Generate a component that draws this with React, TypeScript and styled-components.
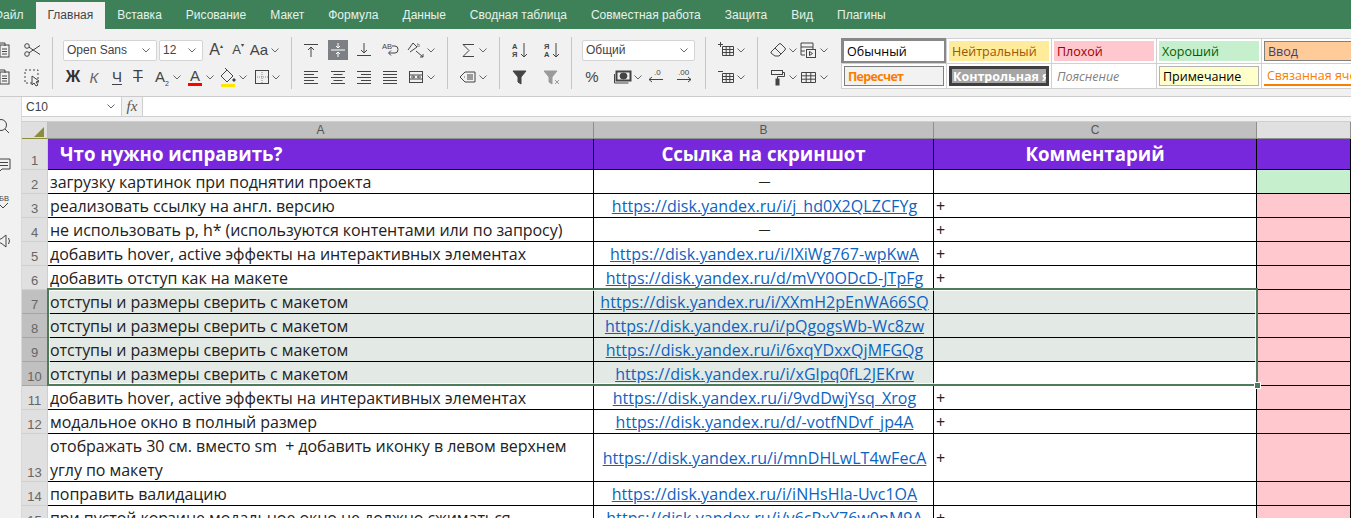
import React from 'react';
import styled, { createGlobalStyle } from 'styled-components';

const GlobalStyle = createGlobalStyle`
  html, body {
    margin: 0;
    height: 518px;
    overflow: hidden;
    background: #f1f1f1;
    font-family: "Liberation Sans", Arial, sans-serif;
  }
`;

const Tabs = styled.div`
  height: 29px;
  background: #3e8159;
  display: flex;
  align-items: flex-end;
  margin-left: -18px;
`;

const Tab = styled.div<{ $active?: boolean }>`
  height: 27px;
  line-height: 26px;
  padding: 0 12px;
  font-size: 12px;
  white-space: nowrap;
  color: ${(p) => (p.$active ? '#444' : '#e6f2ea')};
  background: ${(p) => (p.$active ? '#f1f1f1' : 'transparent')};
`;

const Toolbar = styled.div`
  height: 68px;
  box-sizing: border-box;
  display: flex;
  padding-top: 8px;
  background: #f1f1f1;
  border-bottom: 1px solid #cbcbcb;
  overflow: hidden;
`;

const Group = styled.div<{ $w: number; $pad?: number; $sep?: boolean }>`
  flex: none;
  width: ${(p) => p.$w}px;
  height: 52px;
  box-sizing: border-box;
  padding-left: ${(p) => p.$pad ?? 10}px;
  border-right: ${(p) => (p.$sep === false ? 'none' : '1px solid #c6c6c6')};
`;

const ToolRow = styled.div<{ $second?: boolean }>`
  display: flex;
  align-items: center;
  height: ${(p) => (p.$second ? 28 : 26)}px;
`;

const Tool = styled.div<{ $w?: number; $l?: number; $on?: boolean }>`
  flex: none;
  width: ${(p) => p.$w ?? 20}px;
  height: 20px;
  margin-left: ${(p) => p.$l ?? 0}px;
  display: flex;
  align-items: center;
  justify-content: center;
  color: ${(p) => (p.$on ? '#fff' : '#444')};
  background: ${(p) => (p.$on ? '#7c8085' : 'transparent')};
  font-size: 14px;
  line-height: 20px;
`;

const Select = styled.div<{ $w: number; $l?: number }>`
  flex: none;
  width: ${(p) => p.$w}px;
  height: 21px;
  margin-left: ${(p) => p.$l ?? 0}px;
  box-sizing: border-box;
  padding: 0 6px 0 3px;
  display: flex;
  align-items: center;
  justify-content: space-between;
  background: #fff;
  border: 1px solid #d4d4d4;
  border-radius: 2px;
  font-size: 12px;
  color: #444;
`;

const BoldLetter = styled.span`
  font: bold 16px "Liberation Sans", sans-serif;
  color: #333;
`;
const ItalicLetter = styled.span`
  font: italic 15px "Liberation Sans", sans-serif;
  color: #666;
`;
const UnderLetter = styled.span`
  font-size: 15px;
  border-bottom: 1px solid #444;
  line-height: 14px;
`;
const StrikeLetter = styled.span`
  font-size: 16px;
  text-decoration: line-through;
  text-decoration-thickness: 1px;
`;
const SizeLetter = styled.span<{ $size: number }>`
  font-size: ${(p) => p.$size}px;
`;
const Sup = styled.sup`
  font-size: 6px;
  line-height: 0;
  vertical-align: 7px;
`;
const Sub = styled.sub`
  font-size: 7px;
  line-height: 0;
`;
const ColorLetter = styled.span<{ $bar: string }>`
  font-size: 15px;
  line-height: 15px;
  width: 14px;
  text-align: center;
  border-bottom: 3px solid ${(p) => p.$bar};
`;

const Styles = styled.div`
  flex: none;
  margin-top: 1px;
  display: grid;
  grid-template-columns: repeat(5, 105px);
  grid-template-rows: 25px 25px;
  height: 50px;
`;

const StyleCell = styled.div<{ $flush?: boolean }>`
  box-sizing: border-box;
  border: ${(p) => (p.$flush ? 'none' : '1px solid #d0d0d0')};
  margin: 0 -1px -1px 0;
  padding: ${(p) => (p.$flush ? 0 : 2)}px;
  overflow: hidden;
  background: #fff;
  display: flex;
`;

const Chip = styled.div<{
  $bg?: string;
  $fg?: string;
  $bd?: string;
  $pad?: number;
  $bold?: boolean;
  $italic?: boolean;
  $tight?: boolean;
  $under?: string;
}>`
  flex: 1;
  min-width: 0;
  box-sizing: border-box;
  overflow: hidden;
  white-space: nowrap;
  display: flex;
  align-items: center;
  padding-left: ${(p) => p.$pad ?? 3}px;
  font-family: "Open Sans", sans-serif;
  font-size: 12.5px;
  font-weight: ${(p) => (p.$bold ? 700 : 400)};
  font-style: ${(p) => (p.$italic ? 'italic' : 'normal')};
  letter-spacing: ${(p) => (p.$tight ? '-0.7px' : 'normal')};
  color: ${(p) => p.$fg ?? '#000'};
  background: ${(p) => p.$bg ?? '#fff'};
  border: ${(p) => p.$bd ?? 'none'};
  border-bottom: ${(p) => (p.$under ? `2px solid ${p.$under}` : undefined)};
`;

const Main = styled.div`
  display: flex;
  height: 421px;
`;

const Sidebar = styled.div`
  flex: none;
  width: 22px;
  box-sizing: border-box;
  border-right: 1px solid #d8d8d8;
  overflow: hidden;
  display: flex;
  flex-direction: column;
  gap: 18px;
  padding-top: 20px;
  background: #f1f1f1;
`;

const SideIcon = styled.div`
  height: 20px;
  margin-left: -5px;
  color: #444;
`;

const Content = styled.div`
  flex: 1;
  min-width: 0;
  display: flex;
  flex-direction: column;
`;

const FormulaBar = styled.div`
  height: 20px;
  flex: none;
  box-sizing: border-box;
  display: flex;
  background: #fff;
  border-bottom: 1px solid #cfcfcf;
`;

const NameBox = styled.div`
  width: 100px;
  box-sizing: border-box;
  display: flex;
  align-items: center;
  justify-content: space-between;
  padding: 0 6px 0 4px;
  font-size: 12px;
  color: #444;
  border-right: 1px solid #cfcfcf;
`;

const FxBox = styled.div`
  width: 21px;
  box-sizing: border-box;
  text-align: center;
  font: italic 15px/18px "Liberation Serif", serif;
  color: #555;
  background: #f1f1f1;
  border-right: 1px solid #cfcfcf;
`;

const Spacer = styled.div`
  height: 5px;
  flex: none;
  background: #f1f1f1;
  border-bottom: 1px solid #cfcfcf;
  box-sizing: border-box;
`;

const Sheet = styled.div`
  position: relative;
  flex: 1;
  overflow: hidden;
  background: #fff;
`;

const columns = '26px 546px 340px 323px 1fr';

const HeaderRow = styled.div`
  display: grid;
  grid-template-columns: ${columns};
  height: 17px;
`;

const Corner = styled.div`
  background: #dfdfdf;
  box-sizing: border-box;
  border-bottom: 1px solid #8c8c3e;
  border-right: 1px solid #bdbdbd;
  position: relative;
  &::after {
    content: '';
    position: absolute;
    right: 3px;
    bottom: 1px;
    border-style: solid;
    border-width: 0 0 10px 10px;
    border-color: transparent transparent #8c8c3e transparent;
  }
`;

const ColHead = styled.div<{ $plain?: boolean }>`
  background: ${(p) => (p.$plain ? '#e0e0e0' : '#c0c0c0')};
  box-sizing: border-box;
  border-right: 1px solid #8e8e8e;
  border-bottom: 1px solid #8e8e8e;
  text-align: center;
  font-size: 12px;
  line-height: 16px;
  color: #555;
`;

const Row = styled.div<{ $h: number }>`
  display: grid;
  grid-template-columns: ${columns};
  height: ${(p) => p.$h}px;
`;

const RowHead = styled.div<{ $sel?: boolean }>`
  box-sizing: border-box;
  background: ${(p) => (p.$sel ? '#c0c0c0' : '#e0e0e0')};
  border-right: 1px solid #cfcfcf;
  border-bottom: 1px solid ${(p) => (p.$sel ? '#a6a6a6' : '#cfcfcf')};
  display: flex;
  align-items: flex-end;
  justify-content: center;
  font-size: 13px;
  line-height: 15px;
  padding-bottom: 1px;
  color: #666;
`;

const Cell = styled.div<{ $bg?: string; $center?: boolean; $middle?: boolean }>`
  box-sizing: border-box;
  min-width: 0;
  display: flex;
  align-items: ${(p) => (p.$middle ? 'center' : 'flex-start')};
  justify-content: ${(p) => (p.$center ? 'center' : 'flex-start')};
  padding-left: 2px;
  background: ${(p) => p.$bg ?? '#fff'};
  border-right: 1px solid #000;
  border-bottom: 1px solid #000;
  font-family: "Open Sans", sans-serif;
  font-size: 16px;
  line-height: 24px;
  color: #222;
  white-space: pre-wrap;
  overflow: hidden;
`;

const TaskCell = styled(Cell)`
  letter-spacing: -0.05px;
`;

const TitleCell = styled(Cell)<{ $indent?: number }>`
  align-items: flex-end;
  background: #7828dc;
  color: #fff;
  font-weight: 700;
  font-size: 18.67px;
  line-height: 26px;
  padding-bottom: 2px;
  padding-left: ${(p) => p.$indent ?? 0}px;
  white-space: nowrap;
`;

const Link = styled.a`
  color: #0b63c1;
  text-decoration: underline;
  white-space: nowrap;
  letter-spacing: 0.06px;
`;

const Dash = styled.span`
  font-size: 12px;
`;

const Selection = styled.div`
  position: absolute;
  left: 25px;
  top: 166px;
  width: 1211px;
  height: 98px;
  box-sizing: border-box;
  border: 2px solid #4f7a5c;
  box-shadow: inset 0 0 0 1px rgba(255, 255, 255, 0.8);
  pointer-events: none;
`;

const Handle = styled.div`
  position: absolute;
  right: -5px;
  bottom: -5px;
  width: 5px;
  height: 5px;
  background: #4f7a5c;
  border: 1px solid #fff;
`;

const Chevron = () => (
  <svg width="8" height="5" viewBox="0 0 8 5" fill="none" stroke="#666" strokeWidth="1">
    <path d="M.5 .5L4 4L7.5 .5" />
  </svg>
);

const Chev = ({ l }: { l?: number }) => (
  <Tool $w={10} $l={l}>
    <Chevron />
  </Tool>
);

const gridLines = 'M6.5 6.5h11v9h-11zM6.5 9.5h11M6.5 12.5h11M10.2 6.5v9M13.8 6.5v9';

const icons: Record<string, React.ReactNode> = {
  clipboard: (
    <>
      <rect x="8" y="5" width="9" height="12" />
      <path d="M7 3h6v3M10 9h5M10 11.5h5M10 14h5" />
    </>
  ),
  scissors: (
    <>
      <circle cx="5" cy="6" r="2.3" />
      <circle cx="5" cy="14" r="2.3" />
      <path d="M7 7.2L18 14.5M7 12.8L18 5.5" />
    </>
  ),
  select: (
    <>
      <rect x="3" y="3" width="13" height="13" strokeDasharray="2 2" />
      <path d="M10 9l7 5-3 1 2 3-2 1-2-3-2 2z" fill="#f1f1f1" />
    </>
  ),
  alignTop: <path d="M3 4.5h14M10 17V7M7 10l3-3 3 3" />,
  alignMid: <path d="M3 10h14M10 3v5M8 6l2 2 2-2M10 17v-5M8 14l2-2 2 2" />,
  alignBot: <path d="M3 15.5h14M10 3v10M7 10l3 3 3-3" />,
  wrap: (
    <>
      <text x="2" y="9" fontSize="7.5" fill="currentColor" stroke="none" fontFamily="Liberation Sans">AB</text>
      <path d="M12 6h3q3 0 3 3.5t-3 3.5H9M11 10.5L8.5 13l2.5 2.5" />
    </>
  ),
  orient: (
    <>
      <path d="M2 10l5-7 4 4-7 5M10 11l7 6M14 17h3v-3" />
      <text x="11" y="7" fontSize="5" fill="currentColor" stroke="none" fontFamily="Liberation Sans">b</text>
    </>
  ),
  left: <path d="M3 4.5h14M3 7.5h10M3 10.5h14M3 13.5h10M3 16.5h14" />,
  center: <path d="M3 4.5h14M5.5 7.5h9M3 10.5h14M5.5 13.5h9M3 16.5h14" />,
  right: <path d="M3 4.5h14M7 7.5h10M3 10.5h14M7 13.5h10M3 16.5h14" />,
  justify: <path d="M3 4.5h14M3 7.5h14M3 10.5h14M3 13.5h14M3 16.5h14" />,
  merge: (
    <>
      <rect x="3.5" y="4.5" width="13" height="11" />
      <path d="M3.5 8h13M3.5 12h13M5 10h3.5M7 8.5L8.5 10 7 11.5M15 10h-3.5M13 8.5L11.5 10 13 11.5" />
    </>
  ),
  fill: (
    <>
      <path d="M3 9l6-6 6 6-6 6z" />
      <path d="M9 3L7 1" />
      <circle cx="16" cy="13" r="1.2" fill="currentColor" />
      <path d="M3 18.5h14" stroke="#ffe600" strokeWidth="3" />
    </>
  ),
  border: (
    <>
      <rect x="3.5" y="3.5" width="13" height="13" />
      <path d="M10 5v11M5 10h11" strokeDasharray="1 1" stroke="#888" />
    </>
  ),
  sigma: <path d="M16 4.5H5l6 6-6 6h11" />,
  tag: (
    <>
      <path d="M7 5h10v10H7l-5-5z" />
      <path d="M9 8h6M9 10h6M9 12h6M6 10h.8" />
    </>
  ),
  sortAZ: (
    <>
      <text x="2" y="9" fontSize="7.5" fontWeight="700" fill="currentColor" stroke="none" fontFamily="Liberation Sans">А</text>
      <text x="2" y="17" fontSize="7.5" fontWeight="700" fill="currentColor" stroke="none" fontFamily="Liberation Sans">Я</text>
      <path d="M14 3v14M11 14l3 3 3-3" />
    </>
  ),
  sortZA: (
    <>
      <text x="2" y="9" fontSize="7.5" fontWeight="700" fill="currentColor" stroke="none" fontFamily="Liberation Sans">Я</text>
      <text x="2" y="17" fontSize="7.5" fontWeight="700" fill="currentColor" stroke="none" fontFamily="Liberation Sans">А</text>
      <path d="M14 3v14M11 14l3 3 3-3" />
    </>
  ),
  filter: <path d="M3 4h13l-5 6v7l-3-2v-5z" fill="currentColor" />,
  filterOff: (
    <>
      <path d="M2 4h13l-5 6v7l-3-2v-5z" fill="#9a9a9a" stroke="#9a9a9a" />
      <path d="M13 13l4 4M17 13l-4 4" stroke="#9a9a9a" />
    </>
  ),
  money: (
    <>
      <rect x="3.5" y="4.5" width="14" height="9" fill="none" strokeWidth="2" />
      <ellipse cx="10.5" cy="9" rx="3.5" ry="3" fill="currentColor" />
      <path d="M1.5 7v9h14" />
    </>
  ),
  dec: (
    <>
      <text x="9" y="8" fontSize="8" fill="currentColor" stroke="none" fontFamily="Liberation Sans">.0</text>
      <path d="M18 12.5H4M7 10l-3 2.5L7 15" />
    </>
  ),
  inc: (
    <>
      <text x="3" y="8" fontSize="8" fill="currentColor" stroke="none" fontFamily="Liberation Sans">.00</text>
      <path d="M2 12.5h14M13 10l3 2.5-3 2.5" />
    </>
  ),
  insert: <path d={`${gridLines}M4.5 2v5M2 4.5h5`} />,
  remove: <path d={`${gridLines}M2 4.5h5`} />,
  eraser: <path d="M3 12l8-8q1-1 2 0l4 4q1 1 0 2l-6 6H7l-4-3zM7 8l6 6" />,
  cond: (
    <>
      <path d="M7 15H3V3h12v6M3 7h12M3 11h4" />
      <rect x="8.5" y="9.5" width="9" height="8" fill="#f1f1f1" />
      <path d="M11.5 11.5l3 2-3 2z" />
    </>
  ),
  roller: (
    <>
      <rect x="3.5" y="3.5" width="11" height="4" />
      <path d="M14.5 5.5h2v4H9.5V12" />
      <rect x="8" y="12" width="3" height="6" fill="currentColor" />
    </>
  ),
  table: <path d="M3.5 5.5h14v10h-14zM3.5 8.8h14M3.5 12.2h14M8.2 5.5v10M12.8 5.5v10" />,
  search: (
    <>
      <circle cx="6" cy="8" r="5.5" />
      <path d="M10 12l4 4" />
    </>
  ),
  comment: <path d="M2 4h13v10H7l-3 3v-3H2zM5 7.5h8M5 10.5h8" />,
  spell: (
    <>
      <text x="-1" y="8" fontSize="7.5" fill="currentColor" stroke="none" fontFamily="Liberation Sans">АБВ</text>
      <path d="M5 12l3 3 5-5" />
    </>
  ),
  speaker: <path d="M3 8h3l5-4v12l-5-4H3zM13.5 7q2 3 0 6" />,
};

const Ico = ({ name }: { name: string }) => (
  <svg width="20" height="20" viewBox="0 0 20 20" fill="none" stroke="currentColor" strokeWidth="1">
    {icons[name]}
  </svg>
);

type RowData = { n: number; a: string; b?: string; c?: string; h?: number; sel?: boolean; ok?: boolean };

const rows: RowData[] = [
  { n: 2, a: 'загрузку картинок при поднятии проекта', b: '—', ok: true },
  { n: 3, a: 'реализовать ссылку на англ. версию', b: 'https://disk.yandex.ru/i/j_hd0X2QLZCFYg', c: '+' },
  { n: 4, a: 'не использовать p, h* (используются контентами или по запросу)', b: '—', c: '+' },
  { n: 5, a: 'добавить hover, active эффекты на интерактивных элементах', b: 'https://disk.yandex.ru/i/lXiWg767-wpKwA', c: '+' },
  { n: 6, a: 'добавить отступ как на макете', b: 'https://disk.yandex.ru/d/mVY0ODcD-JTpFg', c: '+' },
  { n: 7, a: 'отступы и размеры сверить с макетом', b: 'https://disk.yandex.ru/i/XXmH2pEnWA66SQ', sel: true },
  { n: 8, a: 'отступы и размеры сверить с макетом', b: 'https://disk.yandex.ru/i/pQgogsWb-Wc8zw', sel: true },
  { n: 9, a: 'отступы и размеры сверить с макетом', b: 'https://disk.yandex.ru/i/6xqYDxxQjMFGQg', sel: true },
  { n: 10, a: 'отступы и размеры сверить с макетом', b: 'https://disk.yandex.ru/i/xGlpq0fL2JEKrw', sel: true },
  { n: 11, a: 'добавить hover, active эффекты на интерактивных элементах', b: 'https://disk.yandex.ru/i/9vdDwjYsq_Xrog', c: '+' },
  { n: 12, a: 'модальное окно в полный размер', b: 'https://disk.yandex.ru/d/-votfNDvf_jp4A', c: '+' },
  {
    n: 13,
    a: 'отображать 30 см. вместо sm  + добавить иконку в левом верхнем углу по макету',
    b: 'https://disk.yandex.ru/i/mnDHLwLT4wFecA',
    c: '+',
    h: 48,
  },
  { n: 14, a: 'поправить валидацию', b: 'https://disk.yandex.ru/i/iNHsHla-Uvc1OA' },
  { n: 15, a: 'при пустой корзине модальное окно не должно сжиматься', b: 'https://disk.yandex.ru/i/v6cRxY76w0nM9A', c: '+' },
];

const tabNames = [
  'Файл', 'Главная', 'Вставка', 'Рисование', 'Макет', 'Формула', 'Данные',
  'Сводная таблица', 'Совместная работа', 'Защита', 'Вид', 'Плагины',
];

const SELECTED = '#e3e9e4';

export default function App() {
  return (
    <>
      <GlobalStyle />
      <Tabs>
        {tabNames.map((t) => (
          <Tab key={t} $active={t === 'Главная'}>
            {t}
          </Tab>
        ))}
      </Tabs>

      <Toolbar>
        <Group $w={53} $pad={0}>
          <ToolRow>
            <Tool $l={-8}><Ico name="clipboard" /></Tool>
            <Tool $l={10}><Ico name="scissors" /></Tool>
          </ToolRow>
          <ToolRow $second>
            <Tool $l={-8}><Ico name="clipboard" /></Tool>
            <Tool $l={10}><Ico name="select" /></Tool>
          </ToolRow>
        </Group>

        <Group $w={239}>
          <ToolRow>
            <Select $w={94}>Open Sans <Chevron /></Select>
            <Select $w={44} $l={2}>12 <Chevron /></Select>
            <Tool $w={18} $l={4}><SizeLetter $size={16}>A<Sup>▴</Sup></SizeLetter></Tool>
            <Tool $w={18} $l={4}><SizeLetter $size={13}>A<Sup>▾</Sup></SizeLetter></Tool>
            <Tool $w={18} $l={3}><SizeLetter $size={15}>Aa</SizeLetter></Tool>
            <Chev l={2} />
          </ToolRow>
          <ToolRow $second>
            <Tool><BoldLetter>Ж</BoldLetter></Tool>
            <Tool $l={1}><ItalicLetter>К</ItalicLetter></Tool>
            <Tool $l={3}><UnderLetter>Ч</UnderLetter></Tool>
            <Tool $l={1}><StrikeLetter>T</StrikeLetter></Tool>
            <Tool $l={4}><SizeLetter $size={15}>A<Sub>2</Sub></SizeLetter></Tool>
            <Chev />
            <Tool $l={3}><ColorLetter $bar="#f00">A</ColorLetter></Tool>
            <Chev />
            <Tool $l={3}><Ico name="fill" /></Tool>
            <Chev />
            <Tool $l={4}><Ico name="border" /></Tool>
            <Chev l={-1} />
          </ToolRow>
        </Group>

        <Group $w={156} $pad={9}>
          <ToolRow>
            <Tool><Ico name="alignTop" /></Tool>
            <Tool $l={7} $on><Ico name="alignMid" /></Tool>
            <Tool $l={6}><Ico name="alignBot" /></Tool>
            <Tool $l={6}><Ico name="wrap" /></Tool>
            <Tool $l={6}><Ico name="orient" /></Tool>
            <Chev />
          </ToolRow>
          <ToolRow $second>
            <Tool><Ico name="left" /></Tool>
            <Tool $l={7}><Ico name="center" /></Tool>
            <Tool $l={6}><Ico name="right" /></Tool>
            <Tool $l={6}><Ico name="justify" /></Tool>
            <Tool $l={6}><Ico name="merge" /></Tool>
            <Chev />
          </ToolRow>
        </Group>

        <Group $w={52}>
          <ToolRow>
            <Tool><Ico name="sigma" /></Tool>
            <Chev />
          </ToolRow>
          <ToolRow $second>
            <Tool><Ico name="tag" /></Tool>
            <Chev />
          </ToolRow>
        </Group>

        <Group $w={72}>
          <ToolRow>
            <Tool><Ico name="sortAZ" /></Tool>
            <Tool $l={12}><Ico name="sortZA" /></Tool>
          </ToolRow>
          <ToolRow $second>
            <Tool><Ico name="filter" /></Tool>
            <Tool $l={12}><Ico name="filterOff" /></Tool>
          </ToolRow>
        </Group>

        <Group $w={134}>
          <ToolRow>
            <Select $w={113}>Общий <Chevron /></Select>
          </ToolRow>
          <ToolRow $second>
            <Tool><SizeLetter $size={15}>%</SizeLetter></Tool>
            <Tool $l={11}><Ico name="money" /></Tool>
            <Chev />
            <Tool $l={2}><Ico name="dec" /></Tool>
            <Tool $l={10}><Ico name="inc" /></Tool>
          </ToolRow>
        </Group>

        <Group $w={52}>
          <ToolRow>
            <Tool><Ico name="insert" /></Tool>
            <Chev />
          </ToolRow>
          <ToolRow $second>
            <Tool><Ico name="remove" /></Tool>
            <Chev />
          </ToolRow>
        </Group>

        <Group $w={83} $sep={false}>
          <ToolRow>
            <Tool><Ico name="eraser" /></Tool>
            <Chev />
            <Tool><Ico name="cond" /></Tool>
            <Chev l={1} />
          </ToolRow>
          <ToolRow $second>
            <Tool><Ico name="roller" /></Tool>
            <Chev />
            <Tool><Ico name="table" /></Tool>
            <Chev l={1} />
          </ToolRow>
        </Group>

        <Styles>
          <StyleCell $flush><Chip $bd="3px solid #888">Обычный</Chip></StyleCell>
          <StyleCell><Chip $bg="#ffeb9c" $fg="#9c5700">Нейтральный</Chip></StyleCell>
          <StyleCell><Chip $bg="#ffc7ce" $fg="#9c0006">Плохой</Chip></StyleCell>
          <StyleCell><Chip $bg="#c6efce" $fg="#006100">Хороший</Chip></StyleCell>
          <StyleCell><Chip $bg="#ffcc99" $fg="#3f3f76" $bd="1px solid #7f7f7f">Ввод</Chip></StyleCell>
          <StyleCell><Chip $bg="#f2f2f2" $fg="#fa7d00" $bd="1px solid #7f7f7f" $bold $tight>Пересчет</Chip></StyleCell>
          <StyleCell><Chip $bg="#a5a5a5" $fg="#fff" $bd="3px solid #3f3f3f" $pad={1} $bold>Контрольная ячейка</Chip></StyleCell>
          <StyleCell><Chip $fg="#7f7f7f" $italic>Пояснение</Chip></StyleCell>
          <StyleCell><Chip $bg="#ffffcc" $bd="1px solid #b2b2b2">Примечание</Chip></StyleCell>
          <StyleCell><Chip $fg="#fa7d00" $under="#fa7d00">Связанная ячейка</Chip></StyleCell>
        </Styles>
      </Toolbar>

      <Main>
        <Sidebar>
          <SideIcon><Ico name="search" /></SideIcon>
          <SideIcon><Ico name="comment" /></SideIcon>
          <SideIcon><Ico name="spell" /></SideIcon>
          <SideIcon><Ico name="speaker" /></SideIcon>
        </Sidebar>
        <Content>
          <FormulaBar>
            <NameBox>C10 <Chevron /></NameBox>
            <FxBox>fx</FxBox>
          </FormulaBar>
          <Spacer />
          <Sheet>
            <HeaderRow>
              <Corner />
              <ColHead>A</ColHead>
              <ColHead>B</ColHead>
              <ColHead>C</ColHead>
              <ColHead $plain />
            </HeaderRow>
            <Row $h={31}>
              <RowHead>1</RowHead>
              <TitleCell $indent={12}>Что нужно исправить?</TitleCell>
              <TitleCell $center>Ссылка на скриншот</TitleCell>
              <TitleCell $center>Комментарий</TitleCell>
              <TitleCell />
            </Row>
            {rows.map((r) => (
              <Row key={r.n} $h={r.h ?? 24}>
                <RowHead $sel={r.sel}>{r.n}</RowHead>
                <TaskCell $bg={r.sel ? SELECTED : undefined}>{r.a}</TaskCell>
                <Cell $center $middle={!!r.h} $bg={r.sel ? SELECTED : undefined}>
                  {r.b === '—' ? <Dash>{r.b}</Dash> : <Link>{r.b}</Link>}
                </Cell>
                <Cell $middle={!!r.h} $bg={r.sel && r.n !== 10 ? SELECTED : undefined}>{r.c}</Cell>
                <Cell $bg={r.ok ? '#c6efce' : '#ffc7ce'} />
              </Row>
            ))}
            <Selection>
              <Handle />
            </Selection>
          </Sheet>
        </Content>
      </Main>
    </>
  );
}
